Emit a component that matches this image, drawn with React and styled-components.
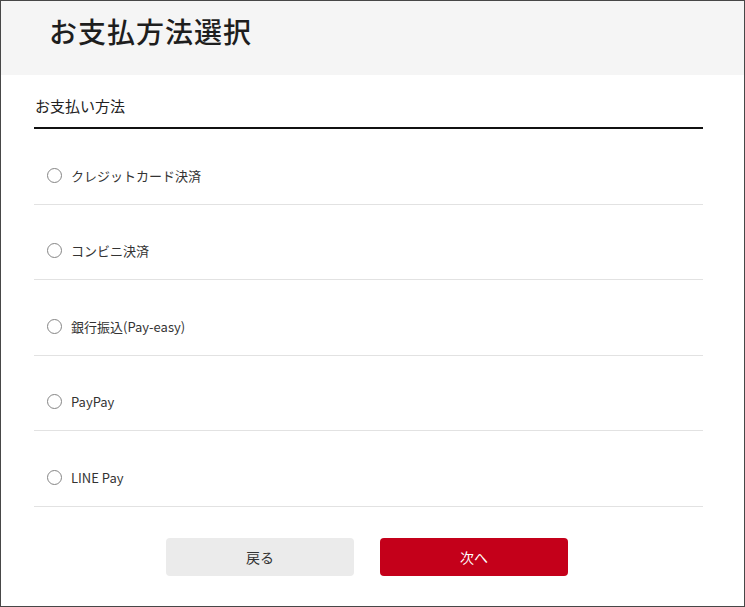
import { useState } from 'react';
import styled, { createGlobalStyle } from 'styled-components';

const Global = createGlobalStyle`
  html, body {
    margin: 0;
    padding: 0;
    background: #fff;
  }
  body {
    font-family: "Noto Sans CJK JP", "Noto Sans", sans-serif;
    color: #222;
  }
`;

const Frame = styled.div`
  width: 745px;
  height: 607px;
  box-sizing: border-box;
  border: 1px solid #474747;
  display: flex;
  flex-direction: column;
  overflow: hidden;
`;

const Header = styled.header`
  height: 74px;
  flex-shrink: 0;
  background: #f5f5f5;
  padding: 10px 0 0 48px;
  box-sizing: border-box;
  h1 {
    margin: 0;
    font-size: 28px;
    line-height: 40px;
    font-weight: 500;
    letter-spacing: 1px;
    color: #1e1e1e;
  }
`;

const Content = styled.main`
  padding: 0 41px 0 33px;
`;

const SectionTitle = styled.h2`
  margin: 20px 0 0;
  padding: 0 0 10px 1px;
  font-size: 15px;
  line-height: 22px;
  font-weight: 400;
  color: #222;
  border-bottom: 2px solid #111;
`;

const List = styled.ul`
  list-style: none;
  margin: 0;
  padding: 0;
`;

const Row = styled.li`
  border-bottom: 1px solid #e2e2e2;
  padding: 36px 0 18.5px 13px;
  label {
    display: flex;
    align-items: center;
    gap: 9px;
    height: 20px;
    font-size: 13px;
    color: #333;
    cursor: pointer;
  }
`;

const Radio = styled.input`
  appearance: none;
  margin: 0;
  width: 15px;
  height: 15px;
  border: 1px solid #858585;
  border-radius: 50%;
  background: #fff;
  box-sizing: border-box;
  position: relative;
  cursor: pointer;
  &:checked::after {
    content: '';
    position: absolute;
    inset: 3px;
    border-radius: 50%;
    background: #c4001a;
  }
`;

const Actions = styled.div`
  display: flex;
  justify-content: center;
  gap: 26px;
  margin-top: 31px;
  padding-right: 3px;
`;

const Button = styled.button`
  width: 188px;
  height: 38px;
  border: none;
  border-radius: 4px;
  font-family: inherit;
  font-size: 14px;
  cursor: pointer;
  background: ${p => (p.$primary ? '#c4001a' : '#ebebeb')};
  color: ${p => (p.$primary ? '#fff' : '#333')};
`;

const methods = [
  'クレジットカード決済',
  'コンビニ決済',
  '銀行振込(Pay-easy)',
  'PayPay',
  'LINE Pay',
];

export default function App() {
  const [selected, setSelected] = useState(null);

  return (
    <>
      <Global />
      <Frame>
        <Header>
          <h1>お支払方法選択</h1>
        </Header>
        <Content>
          <SectionTitle>お支払い方法</SectionTitle>
          <List>
            {methods.map(m => (
              <Row key={m}>
                <label>
                  <Radio
                    type="radio"
                    name="payment"
                    checked={selected === m}
                    onChange={() => setSelected(m)}
                  />
                  {m}
                </label>
              </Row>
            ))}
          </List>
          <Actions>
            <Button type="button">戻る</Button>
            <Button type="button" $primary>次へ</Button>
          </Actions>
        </Content>
      </Frame>
    </>
  );
}
